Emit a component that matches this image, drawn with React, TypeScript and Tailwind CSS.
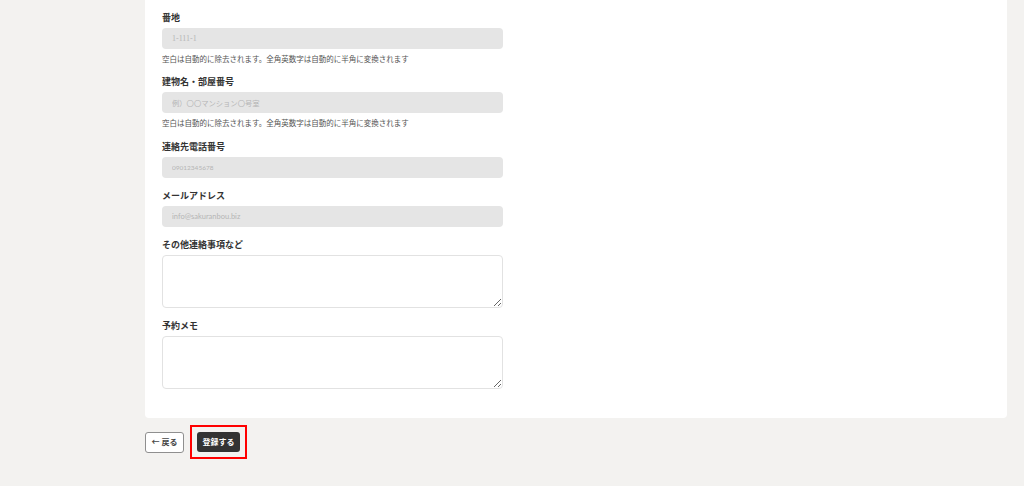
import React from 'react';

type Field = {
  label: string;
  placeholder?: string;
  ph?: string;
  help?: boolean;
  area?: boolean;
  gap: string;
};

const fields: Field[] = [
  {
    label: '番地',
    placeholder: '1-111-1',
    ph: 'text-[8px] [font-family:"Liberation_Serif",serif]',
    help: true,
    gap: 'mb-[12px]',
  },
  {
    label: '建物名・部屋番号',
    placeholder: '例）〇〇マンション〇号室',
    ph: 'text-[7.3px]',
    help: true,
    gap: 'mb-[13px]',
  },
  { label: '連絡先電話番号', placeholder: '09012345678', ph: 'text-[6.5px] [font-family:Lato,sans-serif]', gap: 'mb-[12px]' },
  { label: 'メールアドレス', placeholder: 'info@sakuranbou.biz', ph: 'text-[7.5px] [font-family:Lato,sans-serif]', gap: 'mb-[12px]' },
  { label: 'その他連絡事項など', area: true, gap: 'mb-[12px]' },
  { label: '予約メモ', area: true, gap: 'mb-0' },
];

const helpText = '空白は自動的に除去されます。全角英数字は自動的に半角に変換されます';

export default function App() {
  return (
    <div
      className="min-h-screen bg-[#f3f2f0] pl-[145px] pr-[17px] text-[#333]"
      style={{ fontFamily: '"Noto Sans", "Noto Sans CJK JP", sans-serif' }}
    >
      <div className="bg-white rounded-b-[4px] pl-[17px] pt-[12px] pb-[29px]">
        <div className="w-[341px]">
          {fields.map((f) => (
            <div key={f.label} className={f.gap}>
              <label className="block h-[12px] leading-[12px] text-[9px] font-bold text-[#333] mb-[4px]">
                {f.label}
              </label>
              {f.area ? (
                <textarea className="block w-full h-[53px] rounded-[4px] border border-[#e2e2e2] bg-white" />
              ) : (
                <input
                  disabled
                  placeholder={f.placeholder}
                  className={`block w-full h-[21px] rounded-[4px] bg-[#e5e5e5] px-[10px] placeholder:text-[#b5b5b5] ${f.ph}`}
                />
              )}
              {f.help && (
                <p className="mt-[5px] h-[10px] leading-[10px] text-[7.5px] text-[#555]">{helpText}</p>
              )}
            </div>
          ))}
        </div>
      </div>

      <div className="flex items-center gap-[6px] mt-[7px]">
        <button className="h-[21px] w-[39px] flex items-center justify-center gap-[2px] rounded-[3px] border border-[#8f8f8f] bg-white text-[8px] font-bold text-[#444]">
          <span>←</span>
          <span>戻る</span>
        </button>
        <div className="border-2 border-[#ff0000] p-[5px]">
          <button className="h-[20px] w-[43px] flex items-center justify-center rounded-[3px] bg-[#333] text-[8px] font-bold text-white">
            登録する
          </button>
        </div>
      </div>
    </div>
  );
}
